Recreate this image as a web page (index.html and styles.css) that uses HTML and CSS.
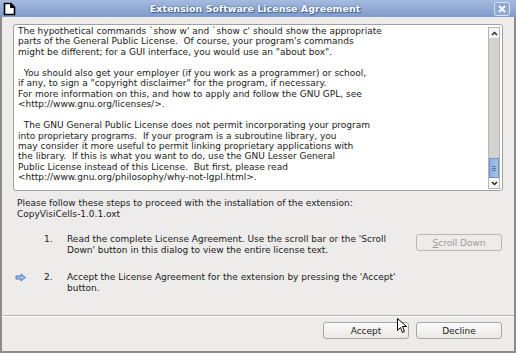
FILE: index.html
```html
<!DOCTYPE html>
<html lang="en">
<head>
    <meta charset="UTF-8">
    <title>Extension Software License Agreement</title>
    <link rel="stylesheet" href="styles.css">
</head>
<body>

    <div class="window">

        <!-- Title bar -->
        <div class="titlebar">
            <svg class="app-icon" width="13" height="14" viewBox="0 0 13 14">
                <path d="M1.5 1.5 H8 L11.5 5 V12.5 H1.5 Z" fill="#fff" stroke="#000" stroke-width="1.6"/>
                <path d="M7.5 1.5 V5.5 H11.5" fill="#000" stroke="#000" stroke-width="1"/>
            </svg>
            <span class="title">Extension Software License Agreement</span>
            <div class="close-btn">
                <svg width="8" height="8" viewBox="0 0 8 8">
                    <path d="M1 1 L7 7 M7 1 L1 7" stroke="#fff" stroke-width="1.8"/>
                </svg>
            </div>
        </div>

        <div class="content">

            <!-- License text -->
            <div class="license-box">
                <pre class="license-text">The hypothetical commands `show w' and `show c' should show the appropriate
parts of the General Public License.  Of course, your program's commands
might be different; for a GUI interface, you would use an "about box".

  You should also get your employer (if you work as a programmer) or school,
if any, to sign a "copyright disclaimer" for the program, if necessary.
For more information on this, and how to apply and follow the GNU GPL, see
&lt;http://www.gnu.org/licenses/&gt;.

  The GNU General Public License does not permit incorporating your program
into proprietary programs.  If your program is a subroutine library, you
may consider it more useful to permit linking proprietary applications with
the library.  If this is what you want to do, use the GNU Lesser General
Public License instead of this License.  But first, please read
&lt;http://www.gnu.org/philosophy/why-not-lgpl.html&gt;.</pre>
                <div class="scrollbar">
                    <div class="sb-arrow">
                        <svg width="7" height="5" viewBox="0 0 7 5"><path d="M1 4 L3.5 1.5 L6 4" fill="none" stroke="#222" stroke-width="1.4"/></svg>
                    </div>
                    <div class="sb-track">
                        <div class="sb-thumb">
                            <span></span><span></span><span></span>
                        </div>
                    </div>
                    <div class="sb-arrow">
                        <svg width="7" height="5" viewBox="0 0 7 5"><path d="M1 1 L3.5 3.5 L6 1" fill="none" stroke="#222" stroke-width="1.4"/></svg>
                    </div>
                </div>
            </div>

            <p class="intro">Please follow these steps to proceed with the installation of the extension:<br>CopyVisiCells-1.0.1.oxt</p>

            <div class="steps">
                <div class="step">
                    <div class="step-mark"></div>
                    <div class="step-num">1.</div>
                    <div class="step-text">Read the complete License Agreement. Use the scroll bar or the 'Scroll Down' button in this dialog to view the entire license text.</div>
                    <button class="btn btn-disabled"><u>S</u>croll Down</button>
                </div>
                <div class="step">
                    <div class="step-mark">
                        <svg width="12" height="9" viewBox="0 0 12 9">
                            <path d="M1 3 H6 V1 L10.5 4.5 L6 8 V6 H1 Z" fill="#9fc0e6" stroke="#4f7fb8" stroke-width="1"/>
                        </svg>
                    </div>
                    <div class="step-num">2.</div>
                    <div class="step-text">Accept the License Agreement for the extension by pressing the 'Accept' button.</div>
                    <div></div>
                </div>
            </div>

            <div class="separator"></div>

            <div class="actions">
                <button class="btn">Accept</button>
                <button class="btn">Decline</button>
            </div>
        </div>

        <!-- mouse pointer lying over the dialog -->
        <svg class="cursor" width="11" height="16" viewBox="0 0 11 16">
            <path d="M0.5 0.5 V12.5 L3.5 9.5 L5.5 14.5 L7.5 13.5 L5.5 8.5 H9.5 Z" fill="#fff" stroke="#000" stroke-width="1"/>
        </svg>
    </div>

</body>
</html>
```

FILE: styles.css
```css
* {
    margin: 0;
    padding: 0;
    box-sizing: border-box;
}

body {
    font-family: "DejaVu Sans", sans-serif;
    font-size: 9px;
    color: #1a1a1a;
    background: #edeceb;
}

.window {
    position: relative;
    width: 516px;
    height: 353px;
    background: #edeceb;
    border: 2px solid #8c8c8c;
    border-top: none;
    display: flex;
    flex-direction: column;
}

/* Title bar */
.titlebar {
    height: 17px;
    margin: 0 -2px;
    background: linear-gradient(#a5bbdf, #7d9bcb);
    display: flex;
    align-items: center;
    padding: 0 6px 0 3px;
}

.app-icon {
    flex: none;
}

.title {
    flex: 1;
    text-align: center;
    color: #fff;
    font-weight: bold;
    font-size: 9.5px;
    text-shadow: 0 0 2px #3e5c8c, 1px 1px 1px #3e5c8c;
}

.close-btn {
    width: 16px;
    height: 14px;
    border: 1px solid #d9e3f3;
    border-radius: 3px;
    background: #8da8d3;
    display: flex;
    align-items: center;
    justify-content: center;
}

.content {
    flex: 1;
    display: flex;
    flex-direction: column;
    padding: 7px 0 0 11px;
}

/* License box */
.license-box {
    width: 490px;
    height: 167px;
    background: #fff;
    border: 1px solid #a0a0a0;
    border-radius: 3px;
    display: flex;
    padding: 1px 2px 1px 4px;
}

.license-text {
    flex: 1;
    font-family: "DejaVu Sans", sans-serif;
    font-size: 9px;
    line-height: 10.45px;
    color: #1a1a1a;
    white-space: pre;
    overflow: hidden;
}

.scrollbar {
    width: 12px;
    display: flex;
    flex-direction: column;
    border: 1px solid #b5b5b5;
    background: #d3d2d0;
    margin-top: 1px;
}

.sb-arrow {
    height: 10px;
    background: #f6f6f5;
    display: flex;
    align-items: center;
    justify-content: center;
}

.sb-track {
    flex: 1;
    display: flex;
    flex-direction: column;
    justify-content: flex-end;
}

.sb-thumb {
    height: 20px;
    background: linear-gradient(90deg, #8fb0e0, #a7c3ec);
    border: 1px solid #6f93c9;
    display: flex;
    flex-direction: column;
    align-items: center;
    justify-content: center;
    gap: 1px;
}

.sb-thumb span {
    width: 4px;
    height: 1px;
    background: #5578ad;
}

/* Steps */
.intro {
    margin-top: 7px;
    padding-left: 4px;
    line-height: 11px;
}

.steps {
    margin-top: 14px;
    display: flex;
    flex-direction: column;
    gap: 16px;
}

.step {
    display: grid;
    grid-template-columns: 31px 23px 349px 86px;
    align-items: start;
    line-height: 11px;
}

.step-mark {
    padding: 1px 0 0 2px;
}

.btn {
    font-family: "DejaVu Sans", sans-serif;
    font-size: 9px;
    height: 17px;
    width: 86px;
    border: 1px solid #a6a6a6;
    border-radius: 3px;
    background: linear-gradient(#fbfbfb, #e9e8e6);
    color: #1a1a1a;
}

.btn-disabled {
    color: #9a9a9a;
    background: #edeceb;
    border-color: #b8b8b8;
}

.separator {
    margin: 21px 0 0 -10px;
    border-top: 1px solid #b3b3b3;
    border-bottom: 1px solid #fff;
}

.actions {
    display: flex;
    justify-content: flex-end;
    gap: 7px;
    padding: 5px 12px 0 0;
}

.cursor {
    position: absolute;
    left: 395px;
    top: 318px;
}
```
